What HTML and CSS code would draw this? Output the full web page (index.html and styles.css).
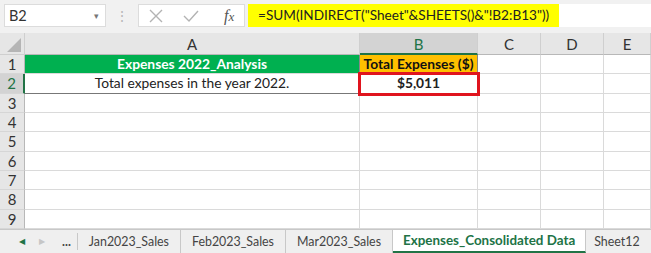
FILE: index.html
```html
<!DOCTYPE html>
<html lang="en">
<head>
    <meta charset="UTF-8">
    <title>Expenses_Consolidated Data</title>
    <link rel="stylesheet" href="styles.css">
</head>
<body>
    <div class="formula-bar">
        <div class="name-box">
            <span>B2</span>
            <span class="caret">&#9662;</span>
        </div>
        <div class="bar-dots">&#8942;</div>
        <div class="fx-buttons">
            <svg class="cancel" width="16" height="16" viewBox="0 0 16 16"><path d="M2 2 L14 14 M14 2 L2 14" stroke="#b3b3b3" stroke-width="1.4" fill="none"/></svg>
            <svg class="enter" width="18" height="16" viewBox="0 0 18 16"><path d="M2 8 L7 13 L16 3" stroke="#b3b3b3" stroke-width="1.4" fill="none"/></svg>
            <span class="fx"><i>f</i><i class="x">x</i></span>
        </div>
        <div class="formula">
            <span class="formula-text">=SUM(INDIRECT("Sheet"&amp;SHEETS()&amp;"!B2:B13"))</span>
        </div>
    </div>

    <div class="sheet">
        <div class="corner"><div class="tri"></div></div>
        <div class="col-head">A</div>
        <div class="col-head active">B</div>
        <div class="col-head">C</div>
        <div class="col-head">D</div>
        <div class="col-head">E</div>

        <div class="row-head">1</div>
        <div class="cell title-green">Expenses 2022_Analysis</div>
        <div class="cell title-orange">Total Expenses ($)</div>
        <div class="cell"></div><div class="cell"></div><div class="cell"></div>

        <div class="row-head active">2</div>
        <div class="cell boxed">Total expenses in the year 2022.</div>
        <div class="cell boxed selected">$5,011</div>
        <div class="cell"></div><div class="cell"></div><div class="cell"></div>

        <div class="row-head">3</div><div class="cell"></div><div class="cell"></div><div class="cell"></div><div class="cell"></div><div class="cell"></div>
        <div class="row-head">4</div><div class="cell"></div><div class="cell"></div><div class="cell"></div><div class="cell"></div><div class="cell"></div>
        <div class="row-head">5</div><div class="cell"></div><div class="cell"></div><div class="cell"></div><div class="cell"></div><div class="cell"></div>
        <div class="row-head">6</div><div class="cell"></div><div class="cell"></div><div class="cell"></div><div class="cell"></div><div class="cell"></div>
        <div class="row-head">7</div><div class="cell"></div><div class="cell"></div><div class="cell"></div><div class="cell"></div><div class="cell"></div>
        <div class="row-head">8</div><div class="cell"></div><div class="cell"></div><div class="cell"></div><div class="cell"></div><div class="cell"></div>
        <div class="row-head">9</div><div class="cell"></div><div class="cell"></div><div class="cell"></div><div class="cell"></div><div class="cell"></div>
    </div>

    <div class="tabs">
        <span class="nav green">&#9664;</span>
        <span class="nav">&#9654;</span>
        <span class="more">...</span>
        <span class="tab">Jan2023_Sales</span>
        <span class="tab">Feb2023_Sales</span>
        <span class="tab">Mar2023_Sales</span>
        <span class="tab current">Expenses_Consolidated Data</span>
        <span class="tab last">Sheet12</span>
    </div>
</body>
</html>
```

FILE: styles.css
```css
body {
    margin: 0;
    width: 651px;
    height: 253px;
    overflow: hidden;
    background: #e9e9e9;
    font-family: Lato, 'Liberation Sans', sans-serif;
    color: #222;
}
.formula-bar {
    display: flex;
    align-items: stretch;
    height: 23px;
    padding: 4px 0 6px 4px;
    background: #f1f1f1;
}
.name-box {
    width: 90px;
    background: white;
    border: 1px solid #dcdcdc;
    display: flex;
    align-items: center;
    justify-content: space-between;
    padding: 0 6px 0 4px;
    font-size: 14.5px;
    color: #333;
}
.caret {
    font-size: 9px;
    color: #777;
}
.bar-dots {
    width: 32px;
    text-align: center;
    color: #b8b8b8;
    font-size: 14px;
    line-height: 23px;
}
.fx-buttons {
    width: 107px;
    background: white;
    border: 1px solid #dcdcdc;
    display: flex;
    align-items: center;
    padding-left: 9px;
    box-sizing: border-box;
}
.enter {
    margin-left: 18px;
}
.fx {
    margin-left: 24px;
    font-family: 'Liberation Serif', serif;
    font-size: 16px;
    color: #555;
}
.fx .x {
    font-size: 13px;
}
.formula {
    flex: 1;
    background: white;
    margin-left: 3px;
    display: flex;
    align-items: stretch;
}
.formula-text {
    background: #ffff00;
    padding: 0 10px 0 10px;
    font-size: 13.6px;
    line-height: 23px;
    color: #222;
    white-space: nowrap;
}

.sheet {
    display: grid;
    grid-template-columns: 25px 335px 118px 63px 63px 1fr;
    grid-template-rows: 22px repeat(9, minmax(0, 1fr));
    height: 196px;
    overflow: hidden;
    background: white;
}
.corner {
    background: #e6e6e6;
    border-right: 1px solid #cfcfcf;
    border-bottom: 1px solid #cfcfcf;
    position: relative;
}
.tri {
    position: absolute;
    right: 3px;
    bottom: 2px;
    width: 0;
    height: 0;
    border-left: 14px solid transparent;
    border-bottom: 14px solid #b5b5b5;
}
.col-head {
    background: #e6e6e6;
    border-right: 1px solid #cfcfcf;
    border-bottom: 1px solid #b8b8b8;
    text-align: center;
    font-size: 15px;
    line-height: 22px;
    color: #333;
}
.col-head.active {
    background: #d3d3d3;
    color: #217346;
    border-bottom: 2px solid #217346;
}
.row-head {
    background: #e6e6e6;
    border-right: 1px solid #b8b8b8;
    border-bottom: 1px solid #d6d6d6;
    text-align: center;
    font-size: 15px;
    line-height: 18px;
    color: #333;
    overflow: hidden;
}
.row-head.active {
    background: #d3d3d3;
    color: #217346;
    border-right: 2px solid #217346;
}
.cell {
    border-right: 1px solid #dadada;
    border-bottom: 1px solid #dadada;
    font-size: 13.8px;
    line-height: 18px;
    text-align: center;
    white-space: nowrap;
    overflow: hidden;
}
.title-green {
    background: #00b050;
    color: white;
    font-weight: bold;
    border-right-color: #888;
}
.title-orange {
    background: #ffc000;
    color: #111;
    font-weight: bold;
    border-right-color: #888;
}
.boxed {
    border-right-color: #777;
    border-bottom-color: #777;
}
.selected {
    font-weight: bold;
    outline: 3px solid #e0141e;
    outline-offset: -1px;
    overflow: visible;
    position: relative;
}

.tabs {
    display: flex;
    align-items: stretch;
    height: 24px;
    background: #efefef;
    border-top: 1px solid #c8c8c8;
    box-sizing: border-box;
    font-size: 12.4px;
    color: #444;
    white-space: nowrap;
    overflow: hidden;
}
.tabs span {
    flex-shrink: 0;
}
.nav {
    font-size: 8px;
    line-height: 23px;
    color: #c6c6c6;
    width: 20px;
    text-align: center;
}
.nav.green {
    color: #217346;
    margin-left: 12px;
}
.more {
    font-weight: bold;
    padding: 0 6px 0 10px;
    line-height: 17px;
    border-right: 1px solid #c8c8c8;
    margin: 3px 0;
}
.tab {
    padding: 0 11px;
    line-height: 23px;
    border-right: 1px solid #c8c8c8;
}
.tab.current {
    background: white;
    color: #217346;
    font-weight: bold;
    font-size: 13.4px;
    padding: 0 10px;
    border-bottom: 2px solid #217346;
    line-height: 21px;
}
.tab.last {
    border-right: none;
    padding: 0 8px;
}
```
